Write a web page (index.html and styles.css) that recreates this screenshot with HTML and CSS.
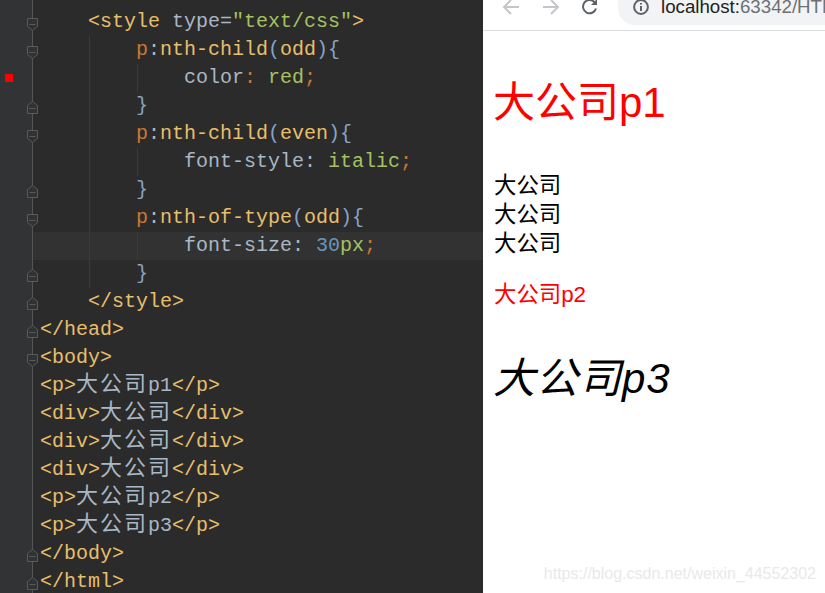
FILE: index.html
```html
<!DOCTYPE html>
<html lang="zh">
<head>
<meta charset="utf-8">
<title>nth-child</title>
<link rel="stylesheet" href="styles.css">
</head>
<body>
<svg class="defs" width="0" height="0" aria-hidden="true">
  <symbol id="fold-open" viewBox="0 0 11 13"><path d="M.5 .5H10.5V8.5L5.5 12.5L.5 8.5Z"/><path d="M2.5 6.5H8.5"/></symbol>
  <symbol id="fold-close" viewBox="0 0 11 13"><path d="M.5 12.5H10.5V4.5L5.5 .5L.5 4.5Z"/><path d="M2.5 7.5H8.5"/></symbol>
</svg>
<main class="split">
  <section class="editor">
    <div class="lead"><div class="gutter"></div></div>
    <div class="row"><div class="gutter"><svg class="fold"><use href="#fold-open"/></svg></div><code class="code">    <b class="t">&lt;style</b> <b class="a">type=</b><b class="s">"text/css"</b><b class="t">&gt;</b></code></div>
    <div class="row g1"><div class="gutter"><svg class="fold"><use href="#fold-open"/></svg></div><code class="code">        <b class="k">p</b><b class="x">:</b><b class="t">nth-child</b><b class="b">(</b><b class="t">odd</b><b class="b">){</b></code></div>
    <div class="row g1 g2"><div class="gutter"><i class="mark"></i></div><code class="code">            <b class="x">color</b><b class="k">:</b> <b class="s">red</b><b class="k">;</b></code></div>
    <div class="row g1"><div class="gutter"><svg class="fold shut"><use href="#fold-close"/></svg></div><code class="code">        <b class="b">}</b></code></div>
    <div class="row g1"><div class="gutter"><svg class="fold"><use href="#fold-open"/></svg></div><code class="code">        <b class="k">p</b><b class="x">:</b><b class="t">nth-child</b><b class="b">(</b><b class="t">even</b><b class="b">){</b></code></div>
    <div class="row g1 g2"><div class="gutter"></div><code class="code">            <b class="x">font-style:</b> <b class="s">italic</b><b class="k">;</b></code></div>
    <div class="row g1"><div class="gutter"><svg class="fold shut"><use href="#fold-close"/></svg></div><code class="code">        <b class="b">}</b></code></div>
    <div class="row g1"><div class="gutter"><svg class="fold"><use href="#fold-open"/></svg></div><code class="code">        <b class="k">p</b><b class="x">:</b><b class="t">nth-of-type</b><b class="b">(</b><b class="t">odd</b><b class="b">){</b></code></div>
    <div class="row g1 g2 current"><div class="gutter"></div><code class="code">            <b class="x">font-size:</b> <b class="n">30</b><b class="s">px</b><b class="k">;</b></code></div>
    <div class="row g1"><div class="gutter"><svg class="fold shut"><use href="#fold-close"/></svg></div><code class="code">        <b class="b">}</b></code></div>
    <div class="row"><div class="gutter"><svg class="fold shut"><use href="#fold-close"/></svg></div><code class="code">    <b class="t">&lt;/style&gt;</b></code></div>
    <div class="row"><div class="gutter"><svg class="fold shut"><use href="#fold-close"/></svg></div><code class="code"><b class="t">&lt;/head&gt;</b></code></div>
    <div class="row"><div class="gutter"><svg class="fold"><use href="#fold-open"/></svg></div><code class="code"><b class="t">&lt;body&gt;</b></code></div>
    <div class="row"><div class="gutter"></div><code class="code"><b class="t">&lt;p&gt;</b><b class="x"><span class="cjk">大公司</span>p1</b><b class="t">&lt;/p&gt;</b></code></div>
    <div class="row"><div class="gutter"></div><code class="code"><b class="t">&lt;div&gt;</b><b class="x cjk">大公司</b><b class="t">&lt;/div&gt;</b></code></div>
    <div class="row"><div class="gutter"></div><code class="code"><b class="t">&lt;div&gt;</b><b class="x cjk">大公司</b><b class="t">&lt;/div&gt;</b></code></div>
    <div class="row"><div class="gutter"></div><code class="code"><b class="t">&lt;div&gt;</b><b class="x cjk">大公司</b><b class="t">&lt;/div&gt;</b></code></div>
    <div class="row"><div class="gutter"></div><code class="code"><b class="t">&lt;p&gt;</b><b class="x"><span class="cjk">大公司</span>p2</b><b class="t">&lt;/p&gt;</b></code></div>
    <div class="row"><div class="gutter"></div><code class="code"><b class="t">&lt;p&gt;</b><b class="x"><span class="cjk">大公司</span>p3</b><b class="t">&lt;/p&gt;</b></code></div>
    <div class="row"><div class="gutter"><svg class="fold shut"><use href="#fold-close"/></svg></div><code class="code"><b class="t">&lt;/body&gt;</b></code></div>
    <div class="row"><div class="gutter"><svg class="fold shut"><use href="#fold-close"/></svg></div><code class="code"><b class="t">&lt;/html&gt;</b></code></div>
  </section>
  <section class="browser">
    <header class="toolbar">
      <svg class="nav" width="18" height="16" viewBox="0 0 18 16"><path d="M17 8H2M9 1L2 8L9 15"/></svg>
      <svg class="nav" width="18" height="16" viewBox="0 0 18 16"><path d="M1 8H16M9 1L16 8L9 15"/></svg>
      <svg class="reload" width="18" height="18" viewBox="0 0 18 18"><path d="M15 10.5A6.6 6.6 0 1 1 13.6 4.3"/><path class="solid" d="M16 1V7H10Z"/></svg>
      <div class="omnibox">
        <svg class="info" width="16" height="16" viewBox="0 0 16 16"><circle cx="8" cy="8" r="6.9"/><path d="M8 7V12M8 4V5.6"/></svg>
        <span class="url">localhost:<span class="url-rest">63342/HTML</span></span>
      </div>
    </header>
    <article class="page">
      <p class="big red">大公司p1</p>
      <div class="line">大公司</div>
      <div class="line">大公司</div>
      <div class="line">大公司</div>
      <p class="small red">大公司p2</p>
      <p class="big slant">大公司p3</p>
    </article>
    <div class="watermark">https://blog.csdn.net/weixin_44552302</div>
  </section>
</main>
</body>
</html>
```
FILE: styles.css
```css
html, body { margin: 0; padding: 0; height: 100%; overflow: hidden; background: #fff; }
.defs { position: absolute; }
.split { display: flex; width: 825px; height: 593px; overflow: hidden; }

.editor { width: 483px; flex: none; background: #2b2b2b; overflow: hidden; display: flex; flex-direction: column; }
.lead { height: 8px; flex: none; display: flex; }
.row { height: 28px; flex: none; display: flex; position: relative; }
.gutter { width: 32px; flex: none; background: #313335; border-right: 1px solid #555; position: relative; }
.code { font-family: "Liberation Mono", monospace; font-size: 20px; line-height: 28px; white-space: pre; padding-left: 7px; color: #a9b7c6; position: relative; }
.code b { font-weight: 400; }
.t { color: #e8bf6a; }
.x { color: #a9b7c6; }
.b { color: #86a4c8; }
.k { color: #cc7832; }
.a { color: #a9b7c6; }
.s { color: #a5c261; }
.n { color: #6897bb; }
.cjk { font-family: "Noto Sans CJK SC", sans-serif; font-size: 22px; line-height: 0; letter-spacing: 2px; }
.current { background: #323232; }
.g1::before, .g2::after { content: ""; position: absolute; top: 0; bottom: 0; width: 1px; background: #3b3b3b; }
.g1::before { left: 89px; }
.g2::after { left: 137px; }
.fold { position: absolute; left: 27px; top: 10px; width: 11px; height: 13px; fill: #303233; stroke: #5a5a5a; stroke-width: 1; }
.fold.shut { top: 9px; }
.mark { position: absolute; left: 5px; top: 10px; width: 8px; height: 8px; background: #f00; }

.browser { flex: 1; min-width: 0; position: relative; overflow: hidden; display: flex; flex-direction: column; background: #fff; }
.toolbar { height: 30px; flex: none; box-sizing: content-box; border-bottom: 1px solid #dadce0; display: flex; align-items: flex-start; overflow: hidden; }
.nav { flex: none; margin: -1px 0 0 19px; fill: none; stroke: #c4c6c9; stroke-width: 2; }
.nav + .nav { margin-left: 22px; }
.reload { flex: none; margin: -2px 0 0 21px; fill: none; stroke: #5f6368; stroke-width: 2; }
.reload .solid { fill: #5f6368; stroke: none; }
.omnibox { flex: 1; height: 25px; margin-left: 19px; background: #f1f3f4; border-radius: 0 0 0 17px; display: flex; align-items: flex-start; padding-left: 15px; overflow: hidden; white-space: nowrap; }
.info { flex: none; margin-top: -1px; fill: none; stroke: #5f6368; stroke-width: 2; }
.url { font-family: "Liberation Sans", sans-serif; font-size: 18.7px; line-height: 14px; margin-left: 12px; color: #202124; }
.url-rest { color: #6c7176; }

.page { padding-left: 10px; font-family: "Liberation Sans", "Noto Sans CJK SC", sans-serif; font-size: 22.4px; color: #000; }
.page p { margin: 0; }
.big { font-size: 42px; line-height: 60px; }
.page .big.red { margin-top: 42px; margin-bottom: 38px; }
.line { line-height: 29px; padding-left: 1px; }
.page .small { margin-top: 22px; line-height: 29px; padding-left: 1px; }
.page .slant { margin-top: 40px; font-style: italic; letter-spacing: 1px; }
.red { color: #f00; }
.watermark { position: absolute; right: 9px; bottom: 9px; font-family: "Liberation Sans", sans-serif; font-size: 16px; line-height: 20px; color: #e9e9e9; }
```
